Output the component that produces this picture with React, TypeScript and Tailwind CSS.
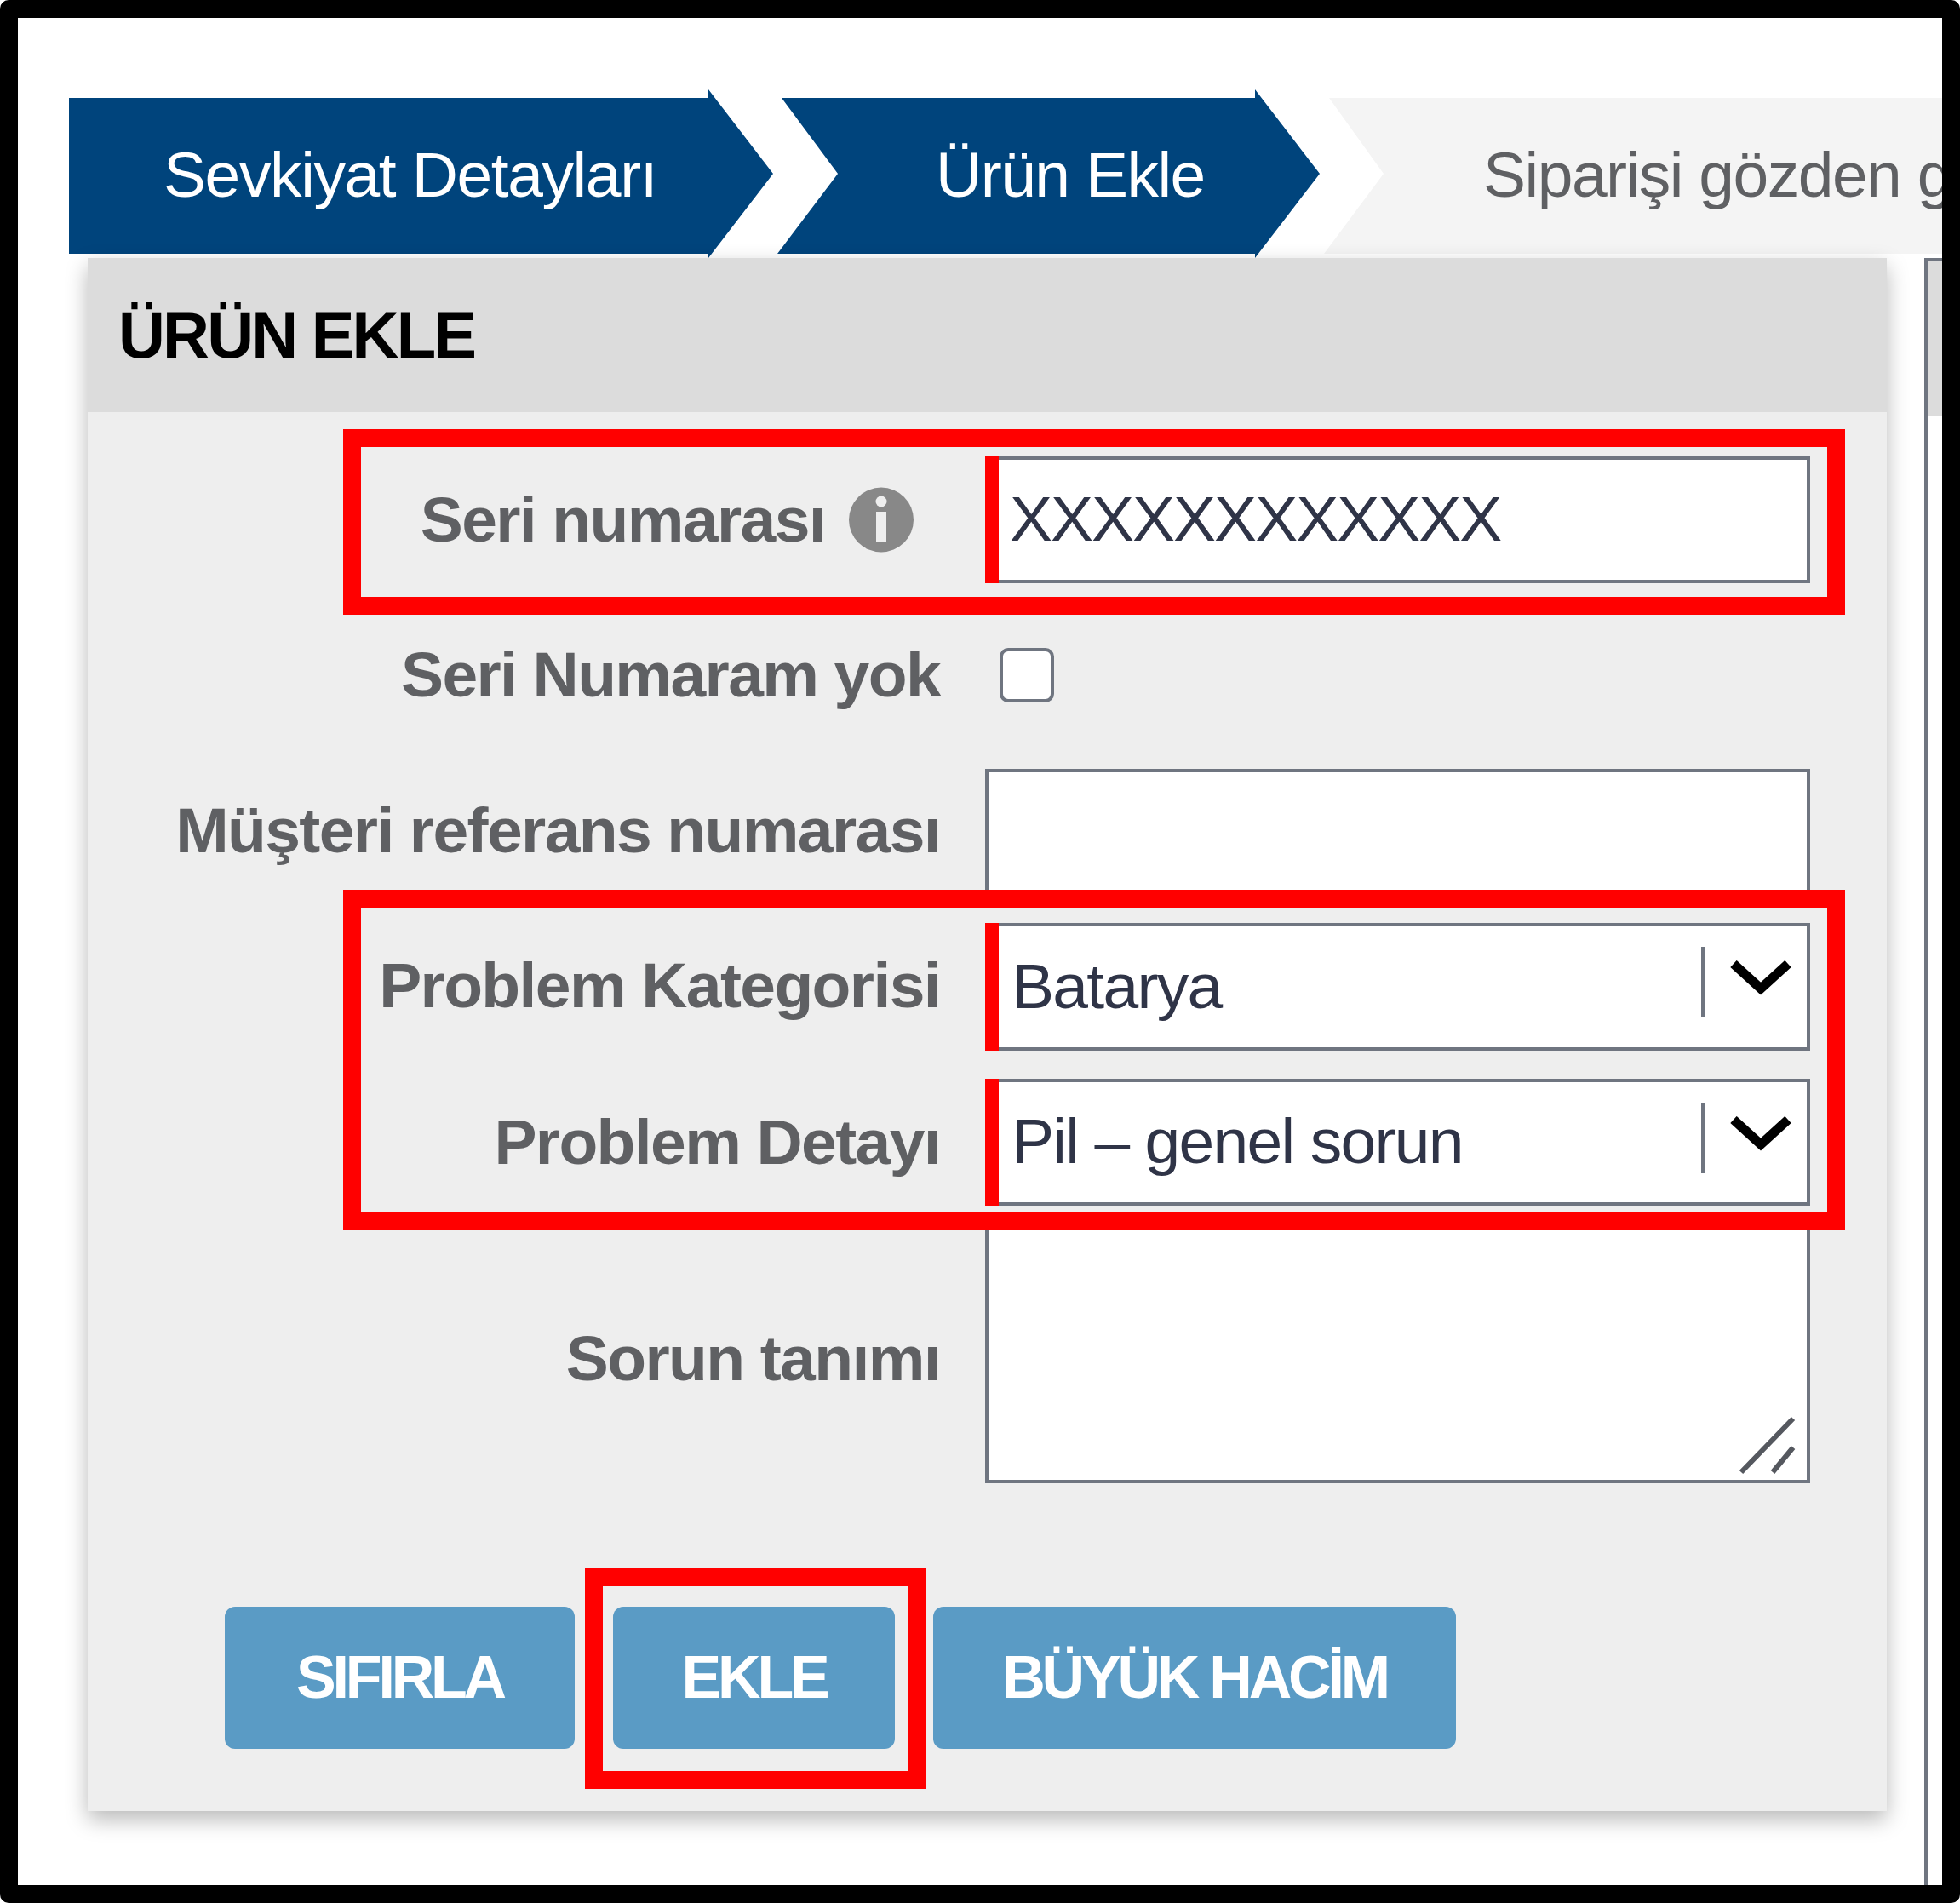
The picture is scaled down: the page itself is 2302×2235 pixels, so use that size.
import React from "react";

const font = "font-['Liberation_Sans',Arial,sans-serif]";

const Chevron = () => (
  <svg width="76" height="42" viewBox="0 0 76 42" className="absolute left-[869px] top-[40px]">
    <path d="M6 4 L38 33 L70 4" fill="none" stroke="#000" strokeWidth="11" />
  </svg>
);

const InfoIcon = () => (
  <svg width="76" height="77" viewBox="0 0 76 77" className="ml-[28px] mr-[31px] shrink-0">
    <circle cx="38" cy="38.5" r="38" fill="#888888" />
    <circle cx="38" cy="17" r="6.5" fill="#eeeeee" />
    <rect x="32" y="29" width="12" height="36" fill="#eeeeee" />
  </svg>
);

const Label = ({ children }: { children: React.ReactNode }) => (
  <span className="text-[75px] leading-none font-bold text-[#5f6063] tracking-[-1.6px] whitespace-nowrap">
    {children}
  </span>
);

const Field = ({ required, className, children }: { required?: boolean; className?: string; children?: React.ReactNode }) => (
  <div className={`relative w-[969px] bg-white border-[4px] border-[#6f7580] ${className ?? ""}`}>
    {required && <div className="absolute -left-[4px] -top-[4px] -bottom-[4px] w-[16px] bg-[#ff0000]" />}
    {children}
  </div>
);

const SelectField = ({ value }: { value: string }) => (
  <Field required className="h-full">
    <div className="h-full flex items-center pl-[27px] pb-[2px] text-[75px] leading-none text-[#2f3447] tracking-[-1.7px]">{value}</div>
    <div className="absolute left-[837px] top-[24px] h-[83px] w-[4px] bg-[#6f7580]" />
    <Chevron />
  </Field>
);

const Row = ({ height, label, info, labelClass, children }: { height: string; label: string; info?: boolean; labelClass?: string; children: React.ReactNode }) => (
  <div className={`flex items-center ${height}`}>
    <div className={`w-[1001px] flex items-center justify-end ${labelClass ?? ""}`}>
      <Label>{label}</Label>
      {info && <InfoIcon />}
    </div>
    <div className="ml-[53px] h-full">{children}</div>
  </div>
);

const RedBox = ({ className }: { className: string }) => (
  <div className={`absolute border-[21px] border-[#ff0000] ${className}`} />
);

const ActionButton = ({ width, children }: { width: string; children: React.ReactNode }) => (
  <button className={`${width} h-[167px] rounded-[12px] bg-[#5a9bc5] text-white text-[70px] font-bold tracking-[-4.2px] flex items-center justify-center whitespace-nowrap`}>
    {children}
  </button>
);

export default function App() {
  return (
    <div className={`${font} w-[2302px] h-[2235px] bg-white border-[21px] border-black rounded-[10px] overflow-hidden`}>
      {/* Steps */}
      <div className="mt-[84px] ml-[60px] h-[198px] flex text-[75px] leading-none">
        <div className="w-[827px] shrink-0 bg-[#00447c] text-white flex items-center pt-[2px] pl-[111px] tracking-[-1.4px] [clip-path:polygon(0_10px,751px_10px,751px_0,827px_99px,751px_198px,751px_193px,0_193px)]">
          Sevkiyat Detayları
        </div>
        <div className="ml-[5px] w-[637px] shrink-0 bg-[#00447c] text-white flex items-center pt-[2px] pl-[186px] tracking-[-1.5px] [clip-path:polygon(5px_10px,561px_10px,561px_0,637px_99px,561px_198px,561px_193px,0_193px,71px_99px)]">
          Ürün Ekle
        </div>
        <div className="ml-[5px] flex-1 overflow-hidden bg-[#f4f4f4] text-[#5f6063] flex items-center pt-[2px] pl-[187px] tracking-[-1.5px] whitespace-nowrap [clip-path:polygon(6px_10px,100%_10px,100%_193px,0_193px,70px_99px)]">
          Siparişi gözden geçir
        </div>
      </div>

      <div className="flex">
        {/* Form panel */}
        <div className="relative ml-[82px] w-[2113px] h-[1824px] bg-[#eeeeee] shadow-[0_10px_24px_rgba(0,0,0,0.28)] shrink-0">
          <div className="h-[181px] bg-[#dcdcdc] flex items-center pl-[36px] text-[76px] font-bold text-black tracking-[-2.8px]">
            ÜRÜN EKLE
          </div>

          <div className="pt-[52px] flex flex-col">
            <Row height="h-[149px]" label="Seri numarası" info>
              <Field required className="h-full">
                <div className="h-full flex items-center pl-[25px] pb-[3px] text-[75px] leading-none text-[#2f3447] tracking-[-2px]">XXXXXXXXXXXX</div>
              </Field>
            </Row>
            <Row height="h-[150px] mt-[34px]" label="Seri Numaram yok" labelClass="pb-[3px]">
              <div className="h-full flex items-center pl-[17px] pb-[3px]">
                <div className="w-[64px] h-[64px] rounded-[10px] border-[4px] border-[#6f7580] bg-white" />
              </div>
            </Row>
            <Row height="h-[148px] mt-[34px]" label="Müşteri referans numarası" labelClass="pb-[3px]">
              <Field className="h-full" />
            </Row>
            <Row height="h-[150px] mt-[33px]" label="Problem Kategorisi" labelClass="pb-[3px]">
              <SelectField value="Batarya" />
            </Row>
            <Row height="h-[149px] mt-[33px]" label="Problem Detayı">
              <SelectField value="Pil – genel sorun" />
            </Row>
            <Row height="h-[302px] mt-[24px]" label="Sorun tanımı" labelClass="pt-[8px]">
              <Field className="h-full">
                <svg width="70" height="70" viewBox="0 0 70 70" className="absolute right-[10px] bottom-[5px]">
                  <path d="M3 66 L64 3 M40 66 L64 37" stroke="#55585f" strokeWidth="6" fill="none" />
                </svg>
              </Field>
            </Row>
          </div>

          <div className="mt-[145px] ml-[161px] flex gap-[45px]">
            <ActionButton width="w-[411px]">SIFIRLA</ActionButton>
            <ActionButton width="w-[331px]">EKLE</ActionButton>
            <ActionButton width="w-[614px]">BÜYÜK HACİM</ActionButton>
          </div>

          {/* Annotation boxes */}
          <RedBox className="left-[300px] top-[201px] w-[1764px] h-[218px]" />
          <RedBox className="left-[300px] top-[742px] w-[1764px] h-[400px]" />
          <RedBox className="left-[584px] top-[1539px] w-[400px] h-[259px]" />
        </div>

        {/* Next panel, cut off by the frame */}
        <div className="ml-[44px] flex-1 h-[1915px] border-l-[4px] border-t-[4px] border-[#6f7580]">
          <div className="h-[182px] bg-[#dcdcdc]" />
        </div>
      </div>
    </div>
  );
}
